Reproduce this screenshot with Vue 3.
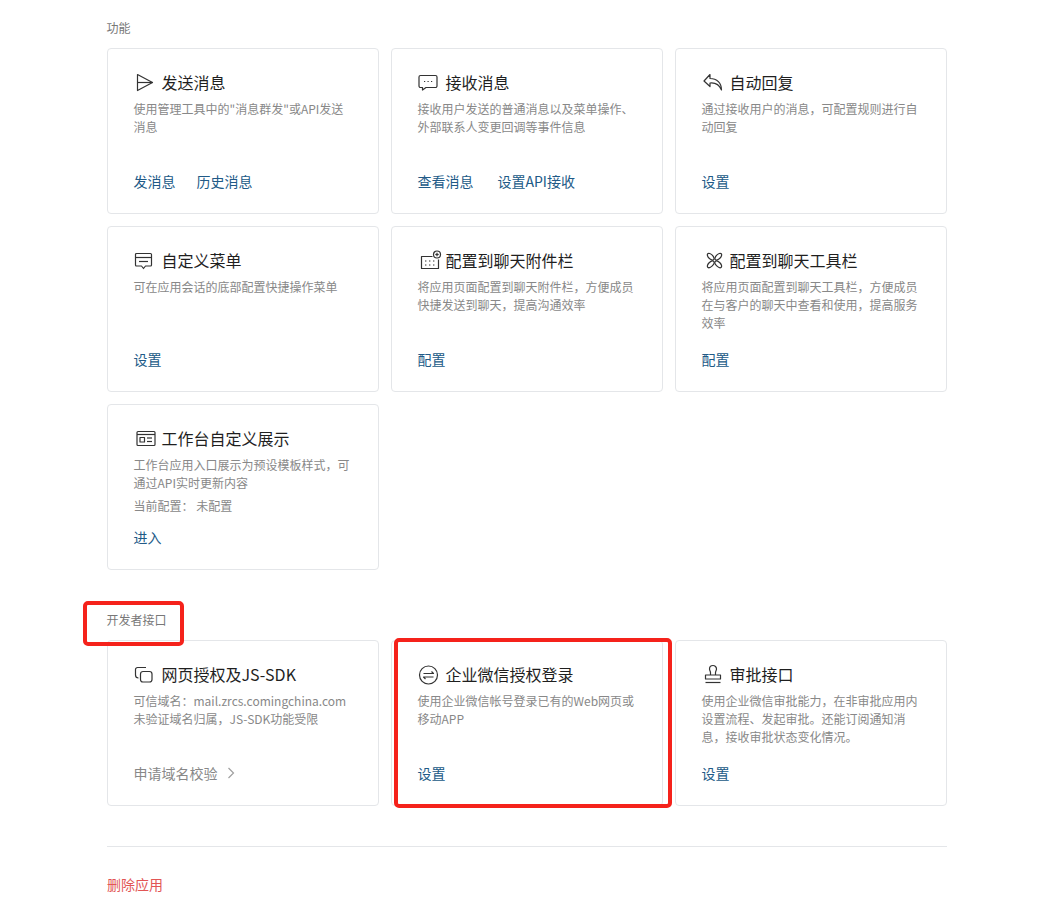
<script setup>
const icons = {
  send: ['M3.5 2.5 18.5 10.5 3.5 18.5Z', 'M3.5 10.5H18.5'],
  chat: ['M2.5 3.5H17.5A1.5 1.5 0 0 1 19 5V14A1.5 1.5 0 0 1 17.5 15.5H8L4.5 18V15.5H2.5A1.5 1.5 0 0 1 1 14V5A1.5 1.5 0 0 1 2.5 3.5Z', 'M6 9.5H7.2', 'M9.5 9.5H10.7', 'M13 9.5H14.2'],
  reply: ['M8 2.5 2 9 8 14.5V11C13 10.5 17 12 19.5 18 19.5 11 15 6.5 8 6.5Z'],
  menu: ['M2.5 3.5H16.5A1 1 0 0 1 17.5 4.5V15A1 1 0 0 1 16.5 16H11.5L9.5 18.5 7.5 16H2.5A1 1 0 0 1 1.5 15V4.5A1 1 0 0 1 2.5 3.5Z', 'M1.5 7.5H17.5', 'M5 11.5H14'],
  attach: ['M14.5 6.5H3.5V18.5H20.5V9.5', 'M7 11H8.4', 'M11 11H12.4', 'M15 11H16.4', 'M7 15H8.4', 'M11 15H12.4', 'M15 15H16.4', 'M22.5 4.5A3.5 3.5 0 1 1 15.5 4.5A3.5 3.5 0 1 1 22.5 4.5Z', 'M19 2.8V6.2', 'M17.3 4.5H20.7'],
  tools: ['M5.73 3.73A4.2 2.2 45 1 1 11.67 9.67A4.2 2.2 45 1 1 5.73 3.73Z', 'M19.27 3.73A4.2 2.2 -45 1 1 13.33 9.67A4.2 2.2 -45 1 1 19.27 3.73Z', 'M5.73 17.27A4.2 2.2 -45 1 1 11.67 11.33A4.2 2.2 -45 1 1 5.73 17.27Z', 'M19.27 17.27A4.2 2.2 45 1 1 13.33 11.33A4.2 2.2 45 1 1 19.27 17.27Z'],
  panel: ['M4 3.5H20A1 1 0 0 1 21 4.5V16.5A1 1 0 0 1 20 17.5H4A1 1 0 0 1 3 16.5V4.5A1 1 0 0 1 4 3.5Z', 'M3 6.5H21', 'M6 9.5H10.5V14H6Z', 'M13 10H18', 'M13 13.5H18'],
  link: ['M4.5 14C2.8 14 1.5 12.8 1.5 11V5.5A2 2 0 0 1 3.5 3.5H12', 'M9 7.5H15.5A2.5 2.5 0 0 1 18 10V15.5A2.5 2.5 0 0 1 15.5 18H9A2.5 2.5 0 0 1 6.5 15.5V10A2.5 2.5 0 0 1 9 7.5Z'],
  login: ['M19.5 11A9 9 0 1 1 1.5 11A9 9 0 1 1 19.5 11Z', 'M5.5 9.5H15.5L13.5 7.5', 'M15.5 13H5.5L7.5 15'],
  stamp: ['M8.5 11V8.5C8.5 7.5 7.5 6.5 7.5 5A3.5 3.5 0 0 1 14.5 5C14.5 6.5 13.5 7.5 13.5 8.5V11', 'M3.5 11H18.5V15H3.5Z', 'M3.5 18.5H18.5']
}

const sections = [
  {
    label: '功能',
    cards: [
      { icon: 'send', title: '发送消息', desc: ['使用管理工具中的"消息群发"或API发送消息'], links: ['发消息', '历史消息'], gap: 21 },
      { icon: 'chat', title: '接收消息', desc: ['接收用户发送的普通消息以及菜单操作、外部联系人变更回调等事件信息'], links: ['查看消息', '设置API接收'], gap: 24 },
      { icon: 'reply', title: '自动回复', desc: ['通过接收用户的消息，可配置规则进行自动回复'], links: ['设置'] },
      { icon: 'menu', title: '自定义菜单', desc: ['可在应用会话的底部配置快捷操作菜单'], links: ['设置'] },
      { icon: 'attach', title: '配置到聊天附件栏', desc: ['将应用页面配置到聊天附件栏，方便成员快捷发送到聊天，提高沟通效率'], links: ['配置'] },
      { icon: 'tools', title: '配置到聊天工具栏', desc: ['将应用页面配置到聊天工具栏，方便成员在与客户的聊天中查看和使用，提高服务效率'], links: ['配置'] },
      { icon: 'panel', title: '工作台自定义展示', desc: ['工作台应用入口展示为预设模板样式，可通过API实时更新内容'], note: '当前配置： 未配置', links: ['进入'] }
    ]
  },
  {
    label: '开发者接口',
    cards: [
      { icon: 'link', title: '网页授权及JS-SDK', desc: ['可信域名：mail.zrcs.comingchina.com', '未验证域名归属，JS-SDK功能受限'], grey: '申请域名校验', links: [] },
      { icon: 'login', title: '企业微信授权登录', desc: ['使用企业微信帐号登录已有的Web网页或移动APP'], links: ['设置'] },
      { icon: 'stamp', title: '审批接口', desc: ['使用企业微信审批能力，在非审批应用内设置流程、发起审批。还能订阅通知消息，接收审批状态变化情况。'], links: ['设置'] }
    ]
  }
]
</script>

<template>
  <div class="page">
    <section v-for="section in sections" :key="section.label" class="section">
      <h2 class="label">{{ section.label }}</h2>
      <div class="grid">
        <article v-for="card in section.cards" :key="card.title" class="card">
          <header class="head">
            <svg class="icon" viewBox="0 0 20 20" width="20" height="20" fill="none">
              <path v-for="d in icons[card.icon]" :key="d" :d="d" />
            </svg>
            <h3 class="title">{{ card.title }}</h3>
          </header>
          <p v-for="line in card.desc" :key="line" class="desc">{{ line }}</p>
          <p v-if="card.note" class="note">{{ card.note }}</p>
          <div class="links" :style="{ gap: (card.gap || 22) + 'px' }">
            <a v-for="link in card.links" :key="link" class="link">{{ link }}</a>
            <a v-if="card.grey" class="link grey">
              {{ card.grey }}
              <svg class="chev" viewBox="0 0 8 12" width="8" height="12" fill="none"><path d="M1.5 1 6.5 6 1.5 11" /></svg>
            </a>
          </div>
        </article>
      </div>
    </section>
    <div class="footer">
      <a class="danger">删除应用</a>
    </div>
    <div class="mark mark-label"></div>
    <div class="mark mark-card"></div>
  </div>
</template>

<style scoped>
.page {
  position: relative;
  box-sizing: border-box;
  width: 1058px;
  height: 904px;
  overflow: hidden;
  padding: 19px 111px 0 107px;
  background: #fff;
  font-family: "Noto Sans CJK SC", "Open Sans", sans-serif;
}
.section { margin-bottom: 41px; }
.section:nth-of-type(2) { margin-bottom: 40px; }
.label {
  margin: 0 0 11px -0.5px;
  font-size: 12px;
  line-height: 18px;
  font-weight: 400;
  color: #787878;
}
.grid {
  display: grid;
  grid-template-columns: repeat(3, 272px);
  gap: 12px;
}
.card {
  box-sizing: border-box;
  height: 166px;
  padding: 22px 26px 22px 25.5px;
  display: flex;
  flex-direction: column;
  border: 1px solid #e4e6e9;
  border-radius: 4px;
}
.head {
  display: flex;
  align-items: center;
  height: 22px;
  margin-bottom: 7px;
}
.icon {
  flex: none;
  margin: 0 7.5px 0 0.5px;
  overflow: visible;
}
.icon path {
  stroke: #333;
  stroke-width: 1.2;
  stroke-linejoin: round;
}
.title {
  margin: 0;
  font-size: 16px;
  line-height: 22px;
  font-weight: 400;
  color: #1f1f1f;
}
.desc {
  margin: 0;
  font-size: 12px;
  line-height: 18px;
  color: #888;
}
.note {
  margin: 5px 0 0;
  font-size: 12px;
  line-height: 18px;
  color: #888;
}
.links {
  display: flex;
  margin-top: auto;
  height: 20px;
}
.link {
  font-size: 14px;
  line-height: 20px;
  color: #215a87;
}
.grey {
  display: flex;
  align-items: center;
  color: #888;
}
.chev {
  margin-left: 9px;
}
.chev path {
  stroke: #a0a0a0;
  stroke-width: 1.2;
}
.footer {
  border-top: 1px solid #e4e6e9;
  padding-top: 27px;
}
.danger {
  display: block;
  font-size: 14px;
  line-height: 20px;
  color: #e25555;
}
.mark {
  position: absolute;
  box-sizing: border-box;
  border: 4px solid #f5221b;
  border-radius: 5px;
}
.mark-label {
  left: 83px;
  top: 601px;
  width: 101px;
  height: 45px;
}
.mark-card {
  left: 394px;
  top: 638px;
  width: 278px;
  height: 170px;
}
</style>
